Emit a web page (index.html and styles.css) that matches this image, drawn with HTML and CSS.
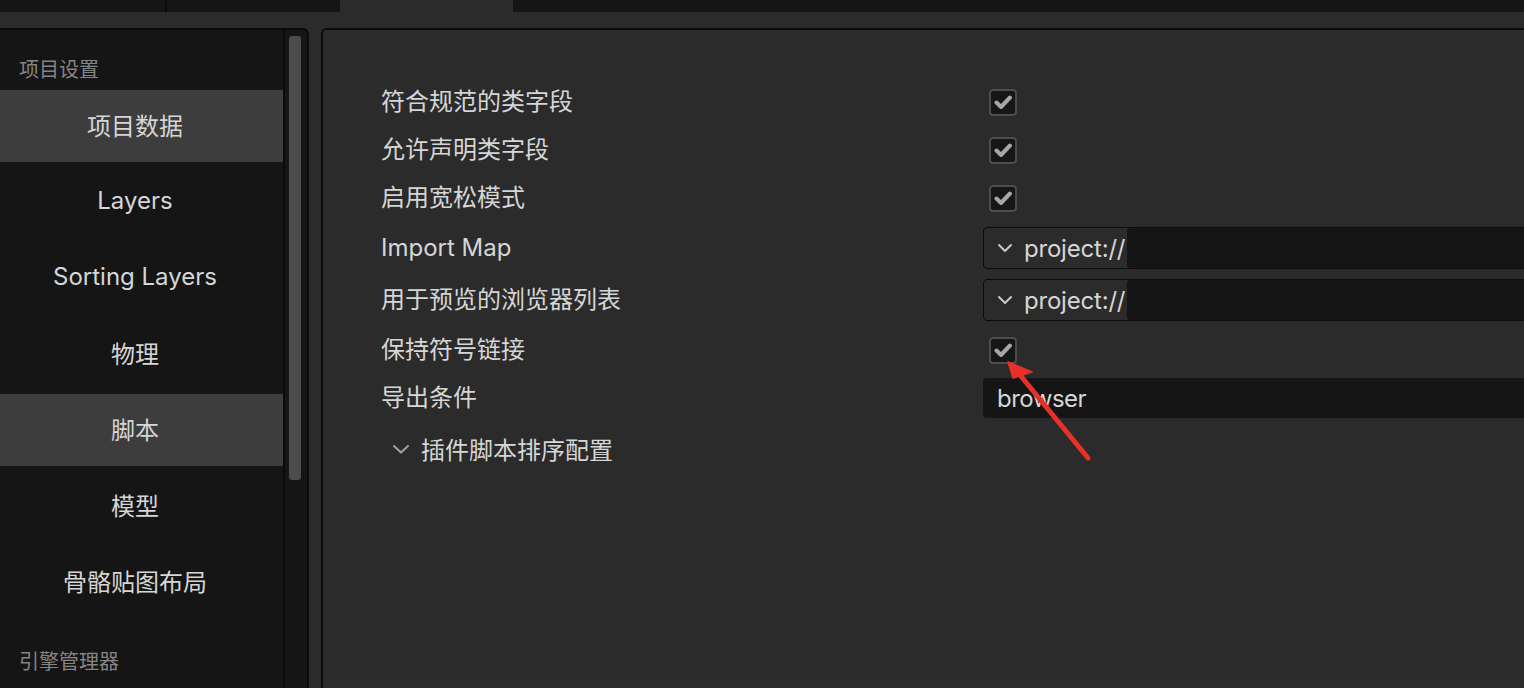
FILE: index.html
```html
<!DOCTYPE html>
<html lang="zh-CN">
<head>
<meta charset="utf-8">
<title>项目设置</title>
<link rel="stylesheet" href="styles.css">
</head>
<body>
<div class="app">
  <div class="tabbar">
    <div class="tab tab-first"></div>
    <div class="tab tab-second"></div>
    <div class="tab tab-active"></div>
    <div class="tab tab-rest"></div>
  </div>
  <div class="workspace">
    <aside class="sidebar">
      <nav class="list">
        <div class="heading">项目设置</div>
        <div class="item active">项目数据</div>
        <div class="item">Layers</div>
        <div class="item">Sorting Layers</div>
        <div class="item">物理</div>
        <div class="item active">脚本</div>
        <div class="item">模型</div>
        <div class="item">骨骼贴图布局</div>
        <div class="heading">引擎管理器</div>
      </nav>
      <div class="track"><div class="thumb"></div></div>
    </aside>
    <main class="content">
      <div class="row">
        <div class="label">符合规范的类字段</div>
        <div class="control"><span class="checkbox"><svg viewBox="0 0 23 23" width="23" height="23"><path d="M4.5 11.5 L9 16 L18 6.5" fill="none" stroke="#a6a6a6" stroke-width="4" stroke-linecap="round" stroke-linejoin="round"/></svg></span></div>
      </div>
      <div class="row">
        <div class="label">允许声明类字段</div>
        <div class="control"><span class="checkbox"><svg viewBox="0 0 23 23" width="23" height="23"><path d="M4.5 11.5 L9 16 L18 6.5" fill="none" stroke="#a6a6a6" stroke-width="4" stroke-linecap="round" stroke-linejoin="round"/></svg></span></div>
      </div>
      <div class="row">
        <div class="label">启用宽松模式</div>
        <div class="control"><span class="checkbox"><svg viewBox="0 0 23 23" width="23" height="23"><path d="M4.5 11.5 L9 16 L18 6.5" fill="none" stroke="#a6a6a6" stroke-width="4" stroke-linecap="round" stroke-linejoin="round"/></svg></span></div>
      </div>
      <div class="row row-tall">
        <div class="label">Import Map</div>
        <div class="control">
          <div class="select">
            <div class="select-proto">
              <svg class="chev" viewBox="0 0 16 10" width="16" height="10"><path d="M2 2 L8 8 L14 2" fill="none" stroke="#c8c8c8" stroke-width="2" stroke-linecap="round" stroke-linejoin="round"/></svg>
              <span>project://</span>
            </div>
            <div class="select-field"></div>
          </div>
        </div>
      </div>
      <div class="row row-tall">
        <div class="label">用于预览的浏览器列表</div>
        <div class="control">
          <div class="select">
            <div class="select-proto">
              <svg class="chev" viewBox="0 0 16 10" width="16" height="10"><path d="M2 2 L8 8 L14 2" fill="none" stroke="#c8c8c8" stroke-width="2" stroke-linecap="round" stroke-linejoin="round"/></svg>
              <span>project://</span>
            </div>
            <div class="select-field"></div>
          </div>
        </div>
      </div>
      <div class="row">
        <div class="label">保持符号链接</div>
        <div class="control"><span class="checkbox"><svg viewBox="0 0 23 23" width="23" height="23"><path d="M4.5 11.5 L9 16 L18 6.5" fill="none" stroke="#a6a6a6" stroke-width="4" stroke-linecap="round" stroke-linejoin="round"/></svg></span></div>
      </div>
      <div class="row">
        <div class="label">导出条件</div>
        <div class="control"><div class="text-input">browser</div></div>
      </div>
      <div class="row row-group">
        <div class="group">
          <svg class="chev" viewBox="0 0 18 10" width="18" height="10"><path d="M2 2 L9 8.5 L16 2" fill="none" stroke="#a0a0a0" stroke-width="2" stroke-linecap="round" stroke-linejoin="round"/></svg>
          <span>插件脚本排序配置</span>
        </div>
      </div>
    </main>
  </div>
  <svg class="annotation" width="1524" height="688" viewBox="0 0 1524 688">
    <line x1="1088" y1="458" x2="1020" y2="375" stroke="#e8302a" stroke-width="5" stroke-linecap="round"/>
    <polygon points="1008,362 1032,372 1013,378" fill="#e8302a" stroke="#e8302a" stroke-width="1.5" stroke-linejoin="round"/>
  </svg>
</div>
</body>
</html>
```

FILE: styles.css
```css
* {
  box-sizing: border-box;
}

html, body {
  margin: 0;
  padding: 0;
  width: 1524px;
  height: 688px;
  overflow: hidden;
  background: #2b2b2b;
}

.app {
  position: relative;
  width: 1524px;
  height: 688px;
  font-family: "Inter", "Noto Sans CJK SC", sans-serif;
  color: #d4d4d4;
}

.tabbar {
  display: flex;
  height: 12px;
  background: #151515;
}

.tab {
  height: 12px;
}

.tab-first {
  width: 167px;
  border-right: 2px solid #0b0b0b;
}

.tab-second {
  width: 173px;
}

.tab-active {
  width: 173px;
  background: #2b2b2b;
}

.tab-rest {
  flex: 1;
}

.workspace {
  display: flex;
  gap: 12px;
  padding-top: 16px;
  height: 676px;
  margin-right: -60px;
}

.sidebar {
  display: flex;
  width: 309px;
  flex: none;
  background: #151515;
  border-top: 2px solid #0b0b0b;
  border-right: 2px solid #0b0b0b;
  border-top-right-radius: 6px;
  overflow: hidden;
}

.list {
  width: 285px;
  flex: none;
  border-right: 2px solid #0b0b0b;
  display: flex;
  flex-direction: column;
}

.heading {
  padding: 26px 19px 6px;
  font-size: 20px;
  line-height: 28px;
  color: #858585;
  flex: none;
}

.item {
  height: 72px;
  margin-bottom: 4px;
  padding: 0 13px 3px 0;
  flex: none;
  display: flex;
  align-items: center;
  justify-content: center;
  font-size: 24px;
  color: #d6d6d6;
}

.item.active {
  background: #3d3d3d;
}

.track {
  flex: 1;
  padding: 6px 4px 0;
}

.thumb {
  width: 12px;
  height: 444px;
  background: #4c4c4c;
  border-radius: 3px;
}

.content {
  flex: 1;
  background: #2b2b2b;
  border-top: 2px solid #0b0b0b;
  border-left: 2px solid #0b0b0b;
  border-top-left-radius: 6px;
  padding: 48px 0 0 58px;
  display: flex;
  flex-direction: column;
}

.row {
  display: flex;
  align-items: center;
  height: 48px;
  flex: none;
}

.row-tall {
  height: 52px;
}

.row-group {
  height: 53px;
}

.label {
  width: 602px;
  flex: none;
  font-size: 24px;
  line-height: 32px;
  color: #d6d6d6;
}

.control {
  flex: 1;
  display: flex;
  align-items: center;
}

.checkbox {
  display: flex;
  align-items: center;
  justify-content: center;
  width: 28px;
  height: 27px;
  margin-left: 6px;
  background: #161616;
  border: 2px solid #4c4c4c;
  border-radius: 4px;
}

.select {
  flex: 1;
  display: flex;
  height: 42px;
  border: 1px solid #0b0b0b;
  border-radius: 4px;
  background: #2b2b2b;
  overflow: hidden;
}

.select-proto {
  display: flex;
  align-items: center;
  gap: 11px;
  padding: 0 2px 0 13px;
  font-size: 24px;
  letter-spacing: -0.2px;
  color: #d6d6d6;
}

.select-field {
  flex: 1;
  background: #151515;
  border-radius: 4px 0 0 4px;
}

.text-input {
  flex: 1;
  height: 40px;
  display: flex;
  align-items: center;
  padding-left: 14px;
  background: #151515;
  border-radius: 4px;
  font-size: 24px;
  letter-spacing: -0.5px;
  color: #d6d6d6;
}

.group {
  display: flex;
  align-items: center;
  gap: 11px;
  padding-left: 11px;
  font-size: 24px;
  color: #d6d6d6;
}

.annotation {
  position: absolute;
  left: 0;
  top: 0;
  pointer-events: none;
}
```
